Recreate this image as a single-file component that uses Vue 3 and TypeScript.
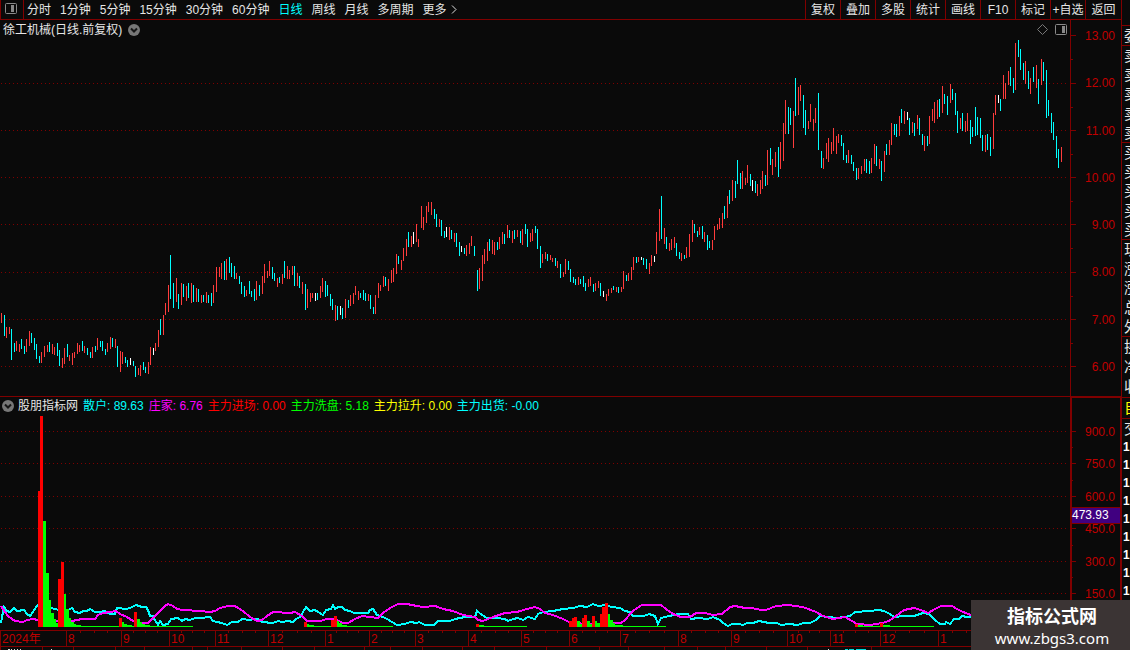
<script setup lang="ts">
interface Bar {
  x: number
  top: number
  height: number
  tone: string
}

const periods = ['分时', '1分钟', '5分钟', '15分钟', '30分钟', '60分钟', '日线', '周线', '月线', '多周期', '更多']
const activePeriod = '日线'
const tools = ['复权', '叠加', '多股', '统计', '画线', 'F10', '标记', '+自选', '返回']

const priceLabels = ['13.00', '12.00', '11.00', '10.00', '9.00', '8.00', '7.00', '6.00']
const priceTicks = [35, 83, 130, 177, 224, 272, 319, 366]
const priceMinor = [59, 107, 154, 201, 248, 296, 343]
const volumeLabels = ['900.0', '750.0', '600.0', '450.0', '300.0', '150.0']
const volumeTicks = [431, 463, 496, 528, 561, 593]
const volumeMinor = [447, 480, 512, 545, 577]

const indicators = [
  { name: '散户', value: '89.63', tone: 'cyan' },
  { name: '庄家', value: '6.76', tone: 'magenta' },
  { name: '主力进场', value: '0.00', tone: 'red' },
  { name: '主力洗盘', value: '5.18', tone: 'green' },
  { name: '主力拉升', value: '0.00', tone: 'yellow' },
  { name: '主力出货', value: '-0.00', tone: 'cyan' },
]

// Daily ranges: tone (r up, c down, w flat), top and bottom, keyed by the index of the first day.
const STEP = 43 / 17
const rangeBlocks: [number, string][] = [
  [0, `r313-323 c315-336 r327-338 r327-334 c329-360 c343-352 r341-351 r344-352 c339-349 c346-354
    r339-352 r331-346 c333-343 c338-350 c344-359 c356-363 r352-363 r346-357 r345-352 c342-352
    r344-354 r347-355 c343-356 c350-366 r358-368 r348-364 c344-357 r355-361 r353-365 r352-358
    r343-354 r345-352 c341-351 r346-353 c348-355 c352-358 r347-358 c346-352 r338-350 c341-347
    c341-351 c349-355 r343-352 r337-349 c338-347 r339-348 c346-367 r351-372 r352-364 c357-363
    c360-367 w358-365 c361-366 c366-377 r368-375 r365-376 c362-370 c367-373 r362-374 r347-365
    w348-355 r343-351 r330-347 c319-335 r315-335 r303-315 r285-312 c255-299 c283-308 r278-302
    c294-309 r283-305 c284-297 r286-301 c283-298 r283-303 c285-302 r288-302 c289-302 r295-303
    c295-302 r292-303 c295-303 c293-306 r285-303 r267-292 r267-277 r263-279 c261-280 r259-280
    c257-273 c263-277 c266-279 r273-279 c276-284 c282-294 c286-297 r290-296 c281-294 c291-297
    c289-301 r281-300 c285-296 r276-294 r264-283 r271-278 r261-276 c267-279 c273-281 r278-287
    c277-283`],
  [111, `r274-284 c261-278 r266-279 r270-279 r266-275 c266-286 r273-286 c276-288 r282-294 c284-310
    r289-308 r293-302 r293-298 w293-301 c293-300 r286-298 r278-292 c281-297 c285-296 c294-306
    c299-310 r305-321 c306-320 w306-315 c308-319 r299-318 c300-308 r295-306 r293-304 r286-295
    r291-300 c293-298 c290-300 c293-301 r294-301 c295-309 c307-314 r295-314 r283-298 r285-291
    r276-287 c277-286 r279-291 r270-283 r268-282 r254-274 c256-264 r260-270 r248-261 r239-256
    c232-247 r236-247 w232-244 r224-242 r239-247 r206-228 r217-230 r206-223 r202-212 r202-215
    c209-219 c214-227 r219-227 c220-236 c231-238 w227-237 r227-240 c230-239 r233-242 c233-247
    c242-256 w246-252 c248-254 r245-256 r243-254 r236-246 c246-256 c270-291 r268-289 r255-281
    r249-264 r242-261 c239-251 r240-254 r242-255 c242-250 r237-249 r232-244 c234-244 r225-238
    c230-238 r231-243 c230-239 r230-237 c231-243 r229-245 c224-234 c229-247 r233-242 r229-241
    c226-233 c229-249 c246-268 r254-263 r252-259 c254-261`],
  [217, `r255-260 r258-262 c258-266 r261-268 c264-278 r272-277 r259-274 c261-270 c269-282 c277-283
    c279-285 r277-285 c279-284 c276-287 c283-291 r279-287 r277-286 c284-292 r283-291 r281-288
    c283-296 w291-297 r294-301 r289-296 r288-293 c286-290 r287-292 c287-293 r287-292 r271-289
    c275-281 r273-281 r267-280 r257-270 c257-263 r257-262 w257-260 c258-265 c259-269 r263-274
    r255-266 w256-262 r232-254 r209-241 c196-239 r228-244 c237-249 r243-251 r239-250 r237-248
    c243-256 c252-259 r253-261 c255-259 r247-258 r234-257 r220-242 c224-233 c231-237 r227-235
    c226-239 r232-242 c235-250 c241-248 r240-250 r226-240 r224-230 r218-229 r213-228 c206-219
    r196-218 c190-204`],
  [289, `r180-201 c181-198 c160-184 c173-189 r171-189 r178-185 r165-183 c174-186 w180-191 c181-193
    r184-196 r180-194 r171-189 c175-186 r150-185 c148-165 r159-175 r152-167 c147-177 r142-169
    r123-161 r100-134 c107-134 c108-125 r111-148 c78-116 r87-115 r85-101 c95-128 c110-135
    r121-129 r104-122 r119-131 r108-123 c93-150 c151-168 r158-169 r143-159 r138-162 r142-154
    r128-151 r136-154 r134-143 c135-146 c143-160 c155-163 r150-163 c155-164 c162-171 c168-180
    r168-179 r166-174 r159-171 c159-173 c161-174 r158-173 r144-164 c146-166 r159-169 c161-181
    r151-172 c144-155 r140-155 r123-145 c124-135 c124-137 r116-136 c109-123 r111-124 w112-120
    c118-135 r122-133 c123-136 r115-129 c118-135`],
  [364, `c134-145 r136-151 c136-146 r116-144 r109-121 r102-123 r100-119 c99-117 r86-113 c94-104
    c96-115 r84-103 c89-100 c93-115 c111-133 r118-129 c113-131 r121-132 r113-131 c120-144
    c127-137 c107-136 c117-135 c118-138 c135-151 r135-152 c134-150 c137-156 r113-149 r95-115
    w95-103 c99-111 r75-99 r83-99 r71-85 c67-86 c78-93 r43-90 c40-57 c49-70 c63-80 r61-84
    c71-89 r78-94 c67-82 r65-88 c79-104 r59-85 c62-81 c70-118 c100-116 c113-133 c122-140
    c136-158 c149-168 r147-162`],
]

const ranges: Bar[] = rangeBlocks.flatMap(([start, block]) =>
  block.trim().split(/\s+/).map((item, i) => {
    const [top, bottom] = item.slice(1).split('-').map(Number)
    return { x: Math.floor(1.48 + STEP * (start + i)), top, height: bottom - top, tone: item[0] }
  }),
)

// Histogram columns: left, width, top. All of them stand on BASE.
const BASE = 627
const columns: [string, number, number, number][] = [
  ['g', 76, 43, 626], ['g', 122, 12, 626], ['g', 137, 56, 626], ['g', 306, 26, 626],
  ['g', 336, 57, 626], ['g', 478, 49, 626], ['g', 610, 56, 626], ['g', 858, 23, 626], ['g', 883, 51, 626],
  ['r', 38, 2, 491], ['r', 40, 3, 416], ['g', 43, 3, 521], ['g', 46, 3, 573], ['g', 49, 2, 600],
  ['g', 51, 3, 613], ['g', 54, 2, 619], ['g', 56, 3, 623], ['r', 58, 3, 579], ['g', 63, 3, 594],
  ['r', 61, 3, 562], ['g', 66, 3, 609], ['g', 69, 2, 618], ['g', 71, 3, 622], ['g', 74, 2, 624],
  ['g', 76, 5, 625], ['g', 121, 3, 622], ['r', 119, 3, 618], ['g', 124, 3, 624], ['g', 127, 5, 625],
  ['r', 134, 3, 612], ['g', 137, 3, 619], ['g', 140, 2, 622], ['g', 142, 3, 624], ['g', 145, 5, 625],
  ['r', 304, 3, 622], ['g', 307, 2, 624], ['g', 309, 5, 625], ['r', 331, 3, 620], ['r', 334, 3, 616],
  ['g', 337, 2, 621], ['g', 339, 3, 623], ['g', 342, 5, 625], ['r', 476, 3, 624], ['g', 479, 5, 625],
  ['r', 569, 3, 621], ['r', 572, 2, 618], ['r', 574, 3, 617], ['g', 577, 3, 621], ['g', 580, 2, 624],
  ['r', 582, 2, 618], ['r', 584, 3, 615], ['g', 587, 3, 621], ['g', 590, 2, 624], ['r', 592, 3, 616],
  ['g', 595, 2, 621], ['g', 597, 3, 623], ['r', 600, 2, 614], ['r', 602, 3, 607], ['r', 605, 3, 603],
  ['g', 608, 2, 614], ['g', 610, 3, 620], ['g', 613, 2, 623], ['g', 615, 8, 625],
  ['r', 855, 3, 624], ['g', 858, 5, 625], ['r', 880, 3, 623], ['g', 883, 7, 625],
]

const retailLine = `1,623 2,617 4,607 7,611 10,612 14,608 17,611 24,610 27,614 30,616 33,612 36,607 38,605 59,610
  68,610 72,608 75,612 80,613 83,611 87,611 90,609 95,612 100,612 105,611 110,614 115,614 117,608 127,609
  132,607 136,605 142,607 146,607 148,610 150,616 153,616 154,619 157,623 158,625 160,621 163,625 168,624
  171,619 178,618 182,621 185,619 190,620 195,618 200,618 210,617 213,621 217,622 222,623 227,625 232,622
  238,622 242,619 250,620 253,619 258,619 262,622 273,623 278,621 282,622 288,621 293,622 296,619 300,617
  303,612 306,607 310,611 315,610 318,612 323,615 326,610 331,609 333,605 335,609 338,607 342,607 345,610
  350,611 354,613 360,613 368,613 370,610 373,609 377,615 383,617 387,619 392,622 397,625 405,624 410,622
  417,623 419,622 425,625 434,625 438,621 450,621 455,619 465,617 475,617 477,611 482,615 487,618 497,618
  505,619 508,621 513,619 518,618 523,620 528,617 535,619 538,614 543,612 553,611 563,609 573,608 580,606
  587,607 593,604 598,606 607,605 611,607 620,608 625,611 630,612 633,616 644,616 649,614 655,616 658,624
  661,618 669,616 679,614 688,614 691,619 698,618 708,619 713,617 720,620 723,623 728,626 732,624 739,624
  743,625 747,623 753,623 759,621 769,623 777,623 781,625 789,624 798,625 803,623 810,623 816,620 820,616
  837,618 850,616 855,612 870,611 879,610 884,611 890,614 894,617 904,616 914,616 923,613 929,614 935,620
  940,624 945,624 946,622 950,624 954,619 959,619 962,616 967,617 975,616 1000,612 1030,620 1062,610`

const dealerLine = `1,606 5,612 8,616 12,619 15,621 23,622 27,620 33,619 38,620 59,621 72,621 77,620 82,619 95,619
  98,615 103,613 110,612 116,611 120,614 127,617 133,621 142,623 148,623 152,619 155,616 160,611 165,606
  168,604 173,606 177,609 183,610 200,611 210,612 215,611 220,608 228,606 235,606 238,608 243,611 250,617
  257,621 262,620 267,616 273,612 290,613 295,612 302,616 307,621 320,621 327,619 335,619 343,623 348,623
  355,619 362,616 370,617 378,618 383,613 390,608 398,604 407,604 417,606 423,607 435,606 443,609 453,611
  463,615 475,617 478,620 483,621 493,617 505,613 517,612 527,609 535,607 540,609 545,613 553,615 563,619
  569,622 585,624 606,624 614,623 621,623 625,620 632,612 637,608 642,605 661,605 666,609 673,614 681,617
  690,617 696,613 705,613 713,615 722,614 730,607 735,606 745,608 752,608 761,610 766,610 776,606 788,605
  803,607 816,612 823,616 833,619 845,617 852,621 857,624 870,625 882,623 889,621 896,616 904,610 914,608
  921,610 928,613 935,609 941,606 952,606 957,609 963,612 971,615 1000,620 1030,610 1062,616`

const monthStarts = [0, 66, 121, 169, 215, 268, 325, 369, 415, 468, 521, 569, 620, 678, 731, 787, 830, 880, 938, 1121]
const monthNames = ['2024年', '8', '9', '10', '11', '12', '1', '2', '3', '4', '5', '6', '7', '8', '9', '10', '11', '12', '1']
const months = monthNames.map((name, i) => ({ name, span: monthStarts[i + 1] - monthStarts[i] }))
const weekTicks = monthStarts.slice(1, -1).flatMap((start, i) => {
  const span = i === 17 ? 55 : monthStarts[i + 2] - start
  return [1, 2, 3].map((q) => Math.round(start + (span * q) / 4))
})
const lowerTicks = [0, 42, 73, 115, 144, 192, 207, 241, 282, 314, 364, 390, 422, 462, 494, 546, 599, 628, 664, 697, 725, 766, 807, 871]

const quoteGroups = [
  { kind: 'head', rows: ['委'] },
  { kind: 'tall', rows: ['卖', '卖', '卖', '卖', '卖'] },
  { kind: 'tall', rows: ['买', '买', '买', '买', '买'] },
  { kind: 'tall', rows: ['现', '涨', '涨', '总', '外'] },
  { kind: 'mid', rows: ['换', '净', '收'] },
  { kind: 'own', rows: ['自'] },
  { kind: 'deal', rows: ['交'] },
]
const dealTimes = Array.from({ length: 9 }, () => '1')
</script>

<template>
  <div class="terminal">
    <main class="board">
      <header class="toolbar">
        <button class="layout-toggle" type="button" aria-label="布局">
          <svg width="12" height="11" viewBox="0 0 12 11">
            <rect x="0.5" y="0.5" width="11" height="10" rx="1" fill="none" stroke="#8a8a8a" />
            <rect x="6" y="2" width="3" height="7" fill="#888" />
          </svg>
        </button>
        <nav class="periods">
          <button v-for="p in periods" :key="p" type="button" :class="{ active: p === activePeriod }">{{ p }}</button>
          <svg class="more" width="6" height="9" viewBox="0 0 6 9"><path d="M1 0.5L5 4.5L1 8.5" fill="none" stroke="#ddd" /></svg>
        </nav>
        <nav class="tools">
          <button v-for="t in tools" :key="t" type="button">{{ t }}</button>
        </nav>
      </header>

      <section class="pane price">
        <div class="plot">
          <svg class="chart" viewBox="0 20 1070 376" preserveAspectRatio="none" shape-rendering="crispEdges">
            <line v-for="y in priceTicks.slice(1)" :key="y" class="dots" x1="1" x2="1068" :y1="y + 0.5" :y2="y + 0.5" />
            <rect v-for="(b, i) in ranges" :key="i" :class="'bar-' + b.tone" :x="b.x" :y="b.top" width="1" :height="b.height" />
          </svg>
          <div class="caption">
            <h1>徐工机械(日线.前复权)</h1>
            <button type="button" aria-label="展开">
              <svg width="12" height="12" viewBox="0 0 12 12">
                <circle cx="6" cy="6" r="6" fill="#777" />
                <path d="M3 4.5L6 7.5L9 4.5" fill="none" stroke="#161616" stroke-width="2" />
              </svg>
            </button>
            <span class="marks">
              <svg width="11" height="11" viewBox="0 0 11 11"><path d="M5.5 0.5L10.5 5.5L5.5 10.5L0.5 5.5Z" fill="none" stroke="#777" /></svg>
              <svg width="12" height="11" viewBox="0 0 12 11">
                <rect x="0.5" y="0.5" width="11" height="10" rx="1" fill="none" stroke="#8a8a8a" />
                <rect x="7" y="2" width="3" height="7" fill="#888" />
              </svg>
            </span>
          </div>
        </div>
        <div class="axis">
          <svg class="ticks" viewBox="0 20 51 376" preserveAspectRatio="none" shape-rendering="crispEdges">
            <rect x="0" y="20" width="1" height="376" />
            <rect v-for="y in priceTicks" :key="y" x="0" :y="y" width="6" height="1" />
            <rect v-for="y in priceMinor" :key="y" x="0" :y="y" width="3" height="1" />
          </svg>
          <ul>
            <li v-for="l in priceLabels" :key="l">{{ l }}</li>
          </ul>
        </div>
      </section>

      <section class="pane volume">
        <div class="plot">
          <svg class="chart" viewBox="0 397 1070 233" preserveAspectRatio="none" shape-rendering="crispEdges">
            <line v-for="y in volumeTicks" :key="y" class="dots" x1="1" x2="1068" :y1="y + 0.5" :y2="y + 0.5" />
            <polyline class="retail" :points="retailLine" />
            <polyline class="dealer" :points="dealerLine" />
            <rect v-for="([tone, x, w, top], i) in columns" :key="i" :class="'col-' + tone" :x="x" :y="top" :width="w" :height="BASE - top" />
          </svg>
          <div class="caption legend">
            <button type="button" aria-label="指标设置">
              <svg width="12" height="12" viewBox="0 0 12 12">
                <circle cx="6" cy="6" r="6" fill="#777" />
                <path d="M3 4.5L6 7.5L9 4.5" fill="none" stroke="#161616" stroke-width="2" />
              </svg>
            </button>
            <h2>股朋指标网</h2>
            <span v-for="n in indicators" :key="n.name" :class="n.tone">{{ n.name }}: {{ n.value }}</span>
          </div>
        </div>
        <div class="axis thick">
          <svg class="ticks" viewBox="0 397 51 233" preserveAspectRatio="none" shape-rendering="crispEdges">
            <rect x="0" y="397" width="51" height="1" />
            <rect x="0" y="397" width="2" height="233" />
            <rect x="50" y="397" width="1" height="233" />
            <rect v-for="y in volumeTicks" :key="y" x="0" :y="y" width="6" height="1" />
            <rect v-for="y in volumeMinor" :key="y" x="0" :y="y" width="3" height="1" />
          </svg>
          <ul>
            <li v-for="l in volumeLabels" :key="l">{{ l }}</li>
          </ul>
          <output class="cursor">473.93</output>
        </div>
      </section>

      <footer class="timeline">
        <svg class="ticks" viewBox="0 630 1121 20" preserveAspectRatio="none" shape-rendering="crispEdges">
          <rect x="0" y="630" width="1121" height="1" />
          <rect x="0" y="646" width="1121" height="1" />
          <rect v-for="x in monthStarts.slice(0, -1)" :key="x" :x="x" y="630" width="1" height="16" />
          <rect v-for="x in weekTicks" :key="x" :x="x" y="631" width="1" height="2" />
          <rect v-for="x in lowerTicks" :key="x" :x="x" y="647" width="1" height="3" />
          <path class="scrap-white" d="M8 649h2v1h-2zM11 649h1v1h-1zM14 649h1v1h-1zM17 649h1v1h-1zM20 649h1v1h-1zM51 649h1v1h-1zM828 649h1v1h-1z" />
          <path class="scrap-cyan" d="M845 649h3v1h-3zM849 649h5v1h-5zM856 649h10v1h-10z" />
        </svg>
        <ol>
          <li v-for="(m, i) in months" :key="i" :style="{ flexGrow: m.span }">{{ m.name }}</li>
        </ol>
      </footer>
    </main>

    <aside class="quotes">
      <div v-for="(g, i) in quoteGroups" :key="i" :class="['group', g.kind]">
        <span v-for="(r, j) in g.rows" :key="j">{{ r }}</span>
      </div>
      <div class="deals">
        <b v-for="(d, i) in dealTimes" :key="i">{{ d }}</b>
      </div>
    </aside>

    <div class="watermark">
      <strong>指标公式网</strong>
      <span>www.zbgs3.com</span>
    </div>
  </div>
</template>

<style>
body {
  background: #0a0a0a;
}
</style>

<style scoped>
.terminal {
  position: relative;
  display: grid;
  grid-template-columns: minmax(0, 1fr) 9px;
  height: 100vh;
  overflow: hidden;
  background: #0a0a0a;
  color: #e6e6e6;
  font: 12px/14px "Liberation Sans", "Noto Sans CJK SC", sans-serif;
}
.terminal button {
  margin: 0;
  padding: 0;
  border: 0;
  background: none;
  color: inherit;
  font: inherit;
  white-space: nowrap;
}
svg {
  display: block;
}
h1,
h2 {
  margin: 0;
  font: inherit;
}
ul,
ol {
  margin: 0;
  padding: 0;
  list-style: none;
}
.board {
  display: flex;
  flex-direction: column;
  min-height: 0;
}
.toolbar {
  display: flex;
  flex: none;
  height: 19px;
  border-bottom: 1px solid #800000;
}
.terminal .layout-toggle {
  width: 24px;
  padding: 0 0 2px 4px;
  border: solid #800000;
  border-width: 0 1px;
}
.periods {
  display: flex;
  gap: 9px;
  align-items: center;
  padding-left: 3px;
}
.periods .active {
  color: #00ffff;
}
.more {
  margin-left: -5px;
}
.tools {
  display: flex;
  margin-left: auto;
}
.terminal .tools button {
  width: 35px;
  border-left: 1px solid #800000;
}
.terminal .tools button:last-child {
  width: 36px;
}
.pane {
  display: grid;
  grid-template-columns: minmax(0, 1fr) 51px;
  min-height: 0;
}
.price {
  flex: 376 1 0;
}
.volume {
  flex: 233 1 0;
  border-top: 1px solid #800000;
}
.plot,
.axis,
.timeline {
  display: grid;
  min-width: 0;
  min-height: 0;
}
.plot > *,
.axis > *,
.timeline > * {
  grid-area: 1 / 1;
  min-width: 0;
  min-height: 0;
}
.chart,
.ticks {
  width: 100%;
  height: 100%;
}
.dots {
  stroke: #800000;
  stroke-width: 1;
  stroke-dasharray: 1 3;
}
.bar-r {
  fill: #ff3c3c;
}
.bar-c {
  fill: #00ffff;
}
.bar-w {
  fill: #ffffff;
}
.col-r {
  fill: #ff0000;
}
.col-g {
  fill: #00ff00;
}
.retail,
.dealer {
  fill: none;
  stroke-width: 2;
}
.retail {
  stroke: #00ffff;
}
.dealer {
  stroke: #ff00ff;
}
.ticks {
  fill: #800000;
}
.scrap-white {
  fill: #dddddd;
}
.scrap-cyan {
  fill: #00dddd;
}
.caption {
  display: flex;
  gap: 6px;
  align-items: center;
  align-self: start;
  height: 19px;
  padding-left: 3px;
  white-space: nowrap;
}
.marks {
  display: flex;
  gap: 7px;
  margin-left: auto;
  padding-right: 3px;
}
.legend {
  gap: 5px;
  height: 17px;
  padding-left: 2px;
}
.legend h2 {
  margin-left: -1px;
}
.cyan {
  color: #00ffff;
}
.magenta {
  color: #ff00ff;
}
.red {
  color: #ff0000;
}
.green {
  color: #00ff00;
}
.yellow {
  color: #ffff00;
}
.axis ul {
  display: flex;
  flex-direction: column;
  justify-content: space-between;
  padding: 9px 6px 22px 0;
  color: #c00000;
  text-align: right;
}
.thick ul {
  padding: 28px 6px 29px 0;
}
.cursor {
  align-self: start;
  height: 15px;
  margin: 110px 1px 0 2px;
  border: solid #800000;
  border-width: 1px 0;
  background: #400080;
  color: #ffffff;
}
.timeline {
  flex: none;
  height: 20px;
}
.timeline ol {
  display: flex;
  color: #c00000;
  line-height: 18px;
}
.timeline li {
  flex: 1 1 0;
  min-width: 0;
  text-indent: 2px;
}
.quotes {
  padding-top: 25px;
  overflow: hidden;
  border-left: 1px solid #800000;
  font-size: 15px;
}
.group {
  display: grid;
  box-sizing: border-box;
  padding-left: 2px;
  border-top: 1px solid #800000;
  line-height: 19px;
}
.head {
  height: 20px;
}
.tall {
  height: 97px;
}
.mid {
  height: 61px;
}
.own {
  height: 21px;
  color: #ffff00;
}
.deal {
  height: 20px;
}
.deals b {
  display: block;
  padding-left: 1px;
  color: #ffffff;
  font-size: 12px;
  line-height: 18px;
}
.watermark {
  position: absolute;
  right: 0;
  bottom: 0;
  display: flex;
  flex-direction: column;
  align-items: center;
  box-sizing: border-box;
  width: 159px;
  height: 50px;
  padding: 2px 0 0 3px;
  background: #3b3434;
  color: #ffffff;
}
.watermark strong {
  font: bold 18px/26px "Noto Sans CJK SC", sans-serif;
}
.watermark span {
  font: 15px/20px "Noto Sans", sans-serif;
}
</style>
